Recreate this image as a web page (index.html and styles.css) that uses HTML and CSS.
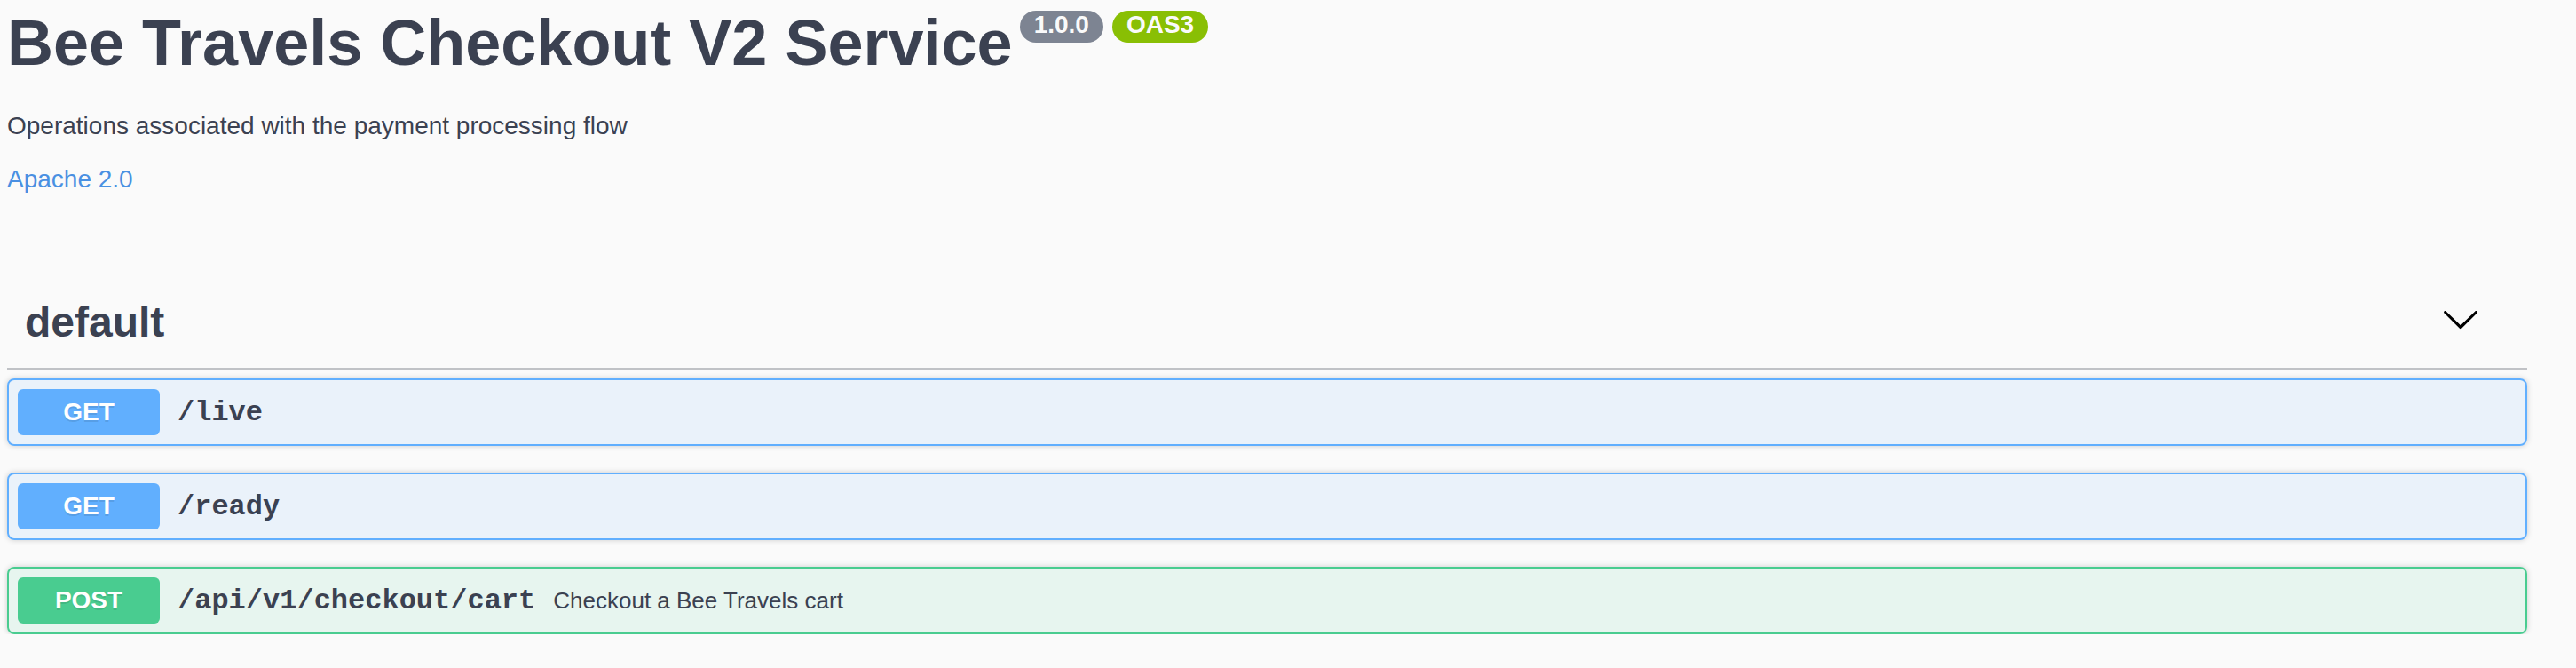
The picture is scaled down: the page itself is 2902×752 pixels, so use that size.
FILE: index.html
```html
<!DOCTYPE html>
<html lang="en">
<head>
<meta charset="utf-8">
<title>Bee Travels Checkout V2 Service</title>
<link rel="stylesheet" href="styles.css">
</head>
<body>
<div class="page">
  <section class="info">
    <h2 class="title">
      <span class="title-text">Bee Travels Checkout V2 Service</span>
      <span class="badge badge-version">1.0.0</span>
      <span class="badge badge-oas">OAS3</span>
    </h2>
    <p class="description">Operations associated with the payment processing flow</p>
    <p class="license"><a href="#">Apache 2.0</a></p>
  </section>

  <section class="tag-section">
    <h3 class="tag">
      <span class="tag-name">default</span>
      <svg class="arrow" viewBox="0 0 20 20" width="44" height="44" aria-hidden="true">
        <path d="M17.418 6.109c.272-.268.709-.268.979 0s.271.701 0 .969l-7.908 7.83c-.27.268-.707.268-.979 0l-7.908-7.83c-.27-.268-.27-.701 0-.969.271-.268.709-.268.979 0L10 13.25l7.418-7.141z" fill="#000"/>
      </svg>
    </h3>

    <div class="opblock opblock-get">
      <div class="summary">
        <span class="method">GET</span>
        <span class="path">/live</span>
      </div>
    </div>

    <div class="opblock opblock-get">
      <div class="summary">
        <span class="method">GET</span>
        <span class="path">/ready</span>
      </div>
    </div>

    <div class="opblock opblock-post">
      <div class="summary">
        <span class="method">POST</span>
        <span class="path">/api/v1/checkout/cart</span>
        <span class="summary-desc">Checkout a Bee Travels cart</span>
      </div>
    </div>
  </section>
</div>
</body>
</html>
```

FILE: styles.css
```css
html, body {
  margin: 0;
  padding: 0;
  background: #fafafa;
}

body {
  font-family: "Liberation Sans", Arial, Helvetica, sans-serif;
  color: #3b4151;
  overflow: hidden;
}

.page {
  width: 2839px;
  margin-left: 8px;
}

/* ---------- info ---------- */
.info {
  padding-top: 8px;
}

.title {
  display: flex;
  align-items: flex-start;
  margin: 0;
  font-size: 72px;
  line-height: 80px;
  font-weight: 700;
  color: #3b4151;
}

.badge {
  margin-top: 4px;
  padding: 0 16px 4px;
  font-size: 28px;
  line-height: 32px;
  font-weight: 700;
  color: #fafafa;
  border-radius: 114px;
}

.badge-version {
  margin-left: 8px;
  background: #7d8492;
}

.badge-oas {
  margin-left: 10px;
  background: #89bf04;
}

.description {
  margin: 38px 0 0;
  font-size: 28px;
  line-height: 32px;
  color: #3b4151;
}

.license {
  margin: 28px 0 0;
  font-size: 28px;
  line-height: 32px;
}

.license a {
  color: #4990e2;
  text-decoration: none;
}

/* ---------- tag ---------- */
.tag-section {
  margin-top: 97px;
}

.tag {
  display: flex;
  align-items: center;
  justify-content: space-between;
  margin: 0 0 10px;
  padding: 20px 53px 23px 20px;
  font-size: 48px;
  line-height: 56px;
  font-weight: 700;
  color: #3b4151;
  border-bottom: 2px solid rgba(59, 65, 81, 0.3);
}

.arrow {
  display: block;
  margin-bottom: 8px;
}

/* ---------- operations ---------- */
.opblock {
  margin: 0 0 30px;
  border: 2px solid #000;
  border-radius: 8px;
  box-shadow: 0 0 6px rgba(0, 0, 0, 0.19);
}

.opblock:last-child {
  margin-bottom: 0;
}

.opblock-get {
  background: rgba(97, 175, 254, 0.1);
  border-color: #61affe;
}

.opblock-get .method {
  background: #61affe;
}

.opblock-post {
  background: rgba(73, 204, 144, 0.1);
  border-color: #49cc90;
}

.opblock-post .method {
  background: #49cc90;
}

.summary {
  display: flex;
  align-items: center;
  padding: 10px;
}

.method {
  box-sizing: border-box;
  min-width: 160px;
  padding: 12px 30px;
  font-size: 28px;
  line-height: 28px;
  font-weight: 700;
  text-align: center;
  color: #fff;
  border-radius: 6px;
  text-shadow: 0 2px 0 rgba(0, 0, 0, 0.1);
}

.path {
  padding: 0 20px;
  font-family: "Liberation Mono", "Courier New", monospace;
  font-size: 32px;
  font-weight: 700;
  color: #3b4151;
}

.summary-desc {
  font-size: 26px;
  color: #3b4151;
}
```
